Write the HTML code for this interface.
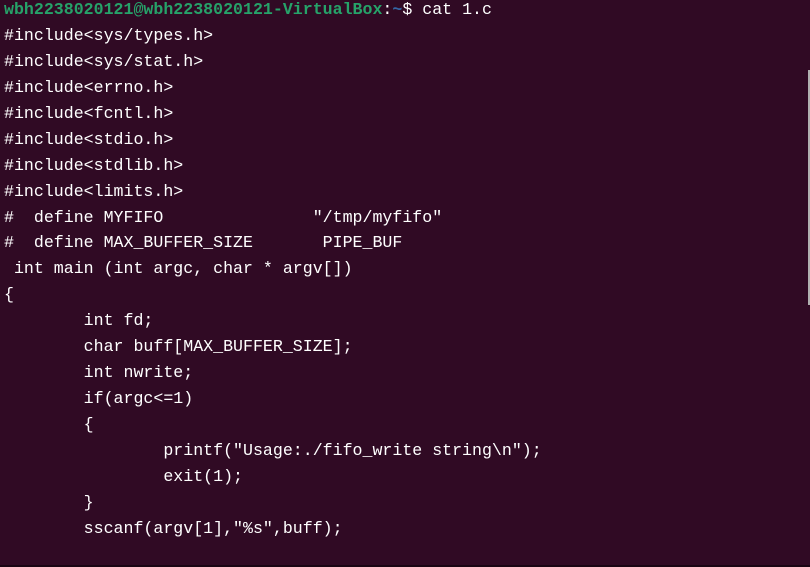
<!DOCTYPE html>
<html><head><meta charset="utf-8"><style>
html,body{margin:0;padding:0;}
body{width:810px;height:567px;background:#300a24;overflow:hidden;position:relative;}
pre{position:absolute;left:4px;top:-3px;margin:0;font-family:"Liberation Mono",monospace;font-size:16.6px;line-height:25.93px;color:#ffffff;white-space:pre;}
.g{color:#26a269;font-weight:bold;}
.b{color:#3465a4;font-weight:bold;}
.sb{position:absolute;left:808px;top:70px;width:2px;height:235px;background:#b0b0b0;}
.bt{position:absolute;left:0;top:565px;width:810px;height:2px;background:#1a0514;}
</style></head><body>
<pre><span class="g">wbh2238020121@wbh2238020121-VirtualBox</span>:<span class="b">~</span>$ cat 1.c
#include&lt;sys/types.h&gt;
#include&lt;sys/stat.h&gt;
#include&lt;errno.h&gt;
#include&lt;fcntl.h&gt;
#include&lt;stdio.h&gt;
#include&lt;stdlib.h&gt;
#include&lt;limits.h&gt;
#  define MYFIFO               "/tmp/myfifo"
#  define MAX_BUFFER_SIZE       PIPE_BUF
 int main (int argc, char * argv[])
{
        int fd;
        char buff[MAX_BUFFER_SIZE];
        int nwrite;
        if(argc&lt;=1)
        {
                printf("Usage:./fifo_write string\n");
                exit(1);
        }
        sscanf(argv[1],"%s",buff);
</pre>
<div class="sb"></div><div class="bt"></div>
</body></html>
